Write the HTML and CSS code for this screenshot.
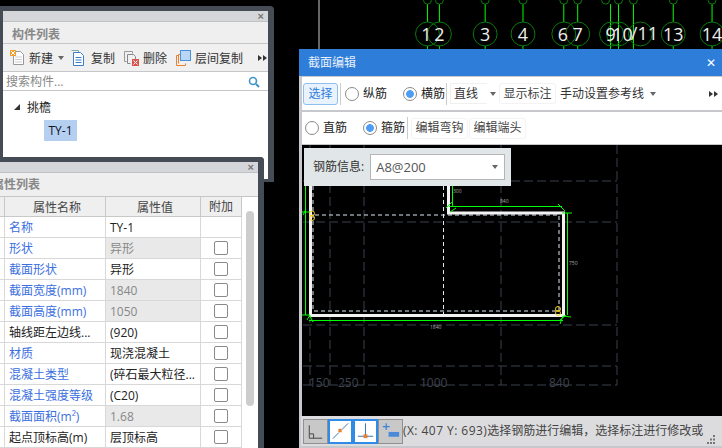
FILE: index.html
```html
<!DOCTYPE html>
<html lang="zh">
<head>
<meta charset="utf-8">
<title>截面编辑</title>
<link rel="stylesheet" href="styles.css">
</head>
<body>
<svg class="axes" viewBox="318 0 404 49" width="404" height="49">
  <g class="axis-lines">
    <path d="M426 4V22M426 46V49M438 4V22M438 46V49M484 4V22M484 46V49M522 4V22M522 46V49M563 4V22M563 46V49M577 4V22M577 46V49M610 4V49M618 4V49M633 4V49M673 4V22M673 46V49M712 4V22M712 46V49"/>
  </g>
  <g class="axis-rings">
    <circle cx="426" cy="0" r="4"/><circle cx="438" cy="0" r="4"/><circle cx="484" cy="0" r="4"/><circle cx="522" cy="0" r="4"/><circle cx="563" cy="0" r="4"/><circle cx="577" cy="0" r="4"/><circle cx="605" cy="0" r="4"/><circle cx="618" cy="0" r="4"/><circle cx="633" cy="0" r="4"/><circle cx="673" cy="0" r="4"/><circle cx="712" cy="0" r="4"/>
    <circle cx="426" cy="34" r="12"/><circle cx="438" cy="34" r="12"/><circle cx="484" cy="34" r="12"/><circle cx="522" cy="34" r="12"/><circle cx="563" cy="34" r="12"/><circle cx="577" cy="34" r="12"/><circle cx="611" cy="34" r="12"/><circle cx="618" cy="34" r="12"/><circle cx="640" cy="34" r="12"/><circle cx="673" cy="34" r="12"/><circle cx="712" cy="34" r="12"/>
  </g>
  <g class="axis-text">
    <text x="425" y="41">1</text><text x="438" y="41">2</text><text x="484" y="41">3</text><text x="522" y="41">4</text><text x="562" y="41">6</text><text x="577" y="41">7</text><text x="610" y="41">9</text><text x="622" y="41">10</text><text x="644" y="40">/11</text><text x="673" y="41">13</text><text x="712" y="41">14</text>
  </g>
</svg>

<section class="panel panel-list">
  <div class="panel-bar"><span class="close">×</span></div>
  <div class="panel-head">构件列表</div>
  <div class="list-tools">
    <span class="tool tool-new">
      <svg width="15" height="16" viewBox="0 0 15 16"><path d="M3.500 1.500h7l3 3v10h-10z" fill="#fff" stroke="#999"/><path d="M5 7h7M5 9.500h7M5 12h7" stroke="#ccc"/><rect x="0" y="0" width="6" height="6" fill="#f0a030"/><path d="M1 1l4 4M5 1l-4 4" stroke="#fff"/></svg>
      <span>新建</span><i class="caret caret-new"></i>
    </span>
    <span class="tool tool-copy">
      <svg width="14" height="16" viewBox="0 0 14 16"><path d="M.5.500h7v2" fill="none" stroke="#8aa"/><path d="M2.500 2.500h7l3 3v10h-10z" fill="#fff" stroke="#3a7fc8"/><path d="M4.500 7.500h6M4.500 10h6M4.500 12.500h6" stroke="#3a7fc8"/></svg>
      <span>复制</span>
    </span>
    <span class="tool tool-del">
      <svg width="15" height="16" viewBox="0 0 15 16"><path d="M.5 1.500h8v2M.5 1.500v10h2" fill="none" stroke="#999"/><path d="M3.500 4.500h6l2 2v3M3.500 4.500v9h3" fill="none" stroke="#888"/><rect x="8" y="9" width="7" height="7" fill="#d9534f"/><path d="M9.500 10.500l4 4M13.500 10.500l-4 4" stroke="#fff"/></svg>
      <span>删除</span>
    </span>
    <span class="tool tool-floor">
      <svg width="15" height="16" viewBox="0 0 15 16"><path d="M.5 15.500v-10h2M.5 15.500h9v-2M2.500 13.500v-9h2" fill="none" stroke="#e8812e" stroke-width="1"/><rect x="4.500" y=".5" width="10" height="10" fill="#b9d6f7" stroke="#4a8fdc"/></svg>
      <span>层间复制</span>
    </span>
    <span class="more"><i></i><i></i></span>
  </div>
  <div class="search">
    <span>搜索构件...</span>
    <svg width="12" height="12" viewBox="0 0 12 12"><circle cx="5" cy="5" r="3.500" fill="none" stroke="#3d95c9" stroke-width="1.600"/><path d="M8 8l3 3" stroke="#3d95c9" stroke-width="2"/></svg>
  </div>
  <div class="tree">
    <div class="tree-root"><i class="tree-arrow"></i><span>挑檐</span></div>
    <div class="tree-leaf"><span>TY-1</span></div>
  </div>
</section>

<section class="panel panel-props">
  <div class="panel-bar"><span class="close">×</span></div>
  <div class="panel-head">属性列表</div>
  <div class="props-body">
    <div class="props">
      <div class="row row-head"><b></b><b>属性名称</b><b>属性值</b><b>附加</b></div>
      <div class="row"><b></b><b class="link">名称</b><b>TY-1</b><b></b></div>
      <div class="row"><b></b><b class="link">形状</b><b class="ro">异形</b><b><i class="check"></i></b></div>
      <div class="row"><b></b><b class="link">截面形状</b><b>异形</b><b><i class="check"></i></b></div>
      <div class="row"><b></b><b class="link">截面宽度(mm)</b><b class="ro">1840</b><b><i class="check"></i></b></div>
      <div class="row"><b></b><b class="link">截面高度(mm)</b><b class="ro">1050</b><b><i class="check"></i></b></div>
      <div class="row"><b></b><b>轴线距左边线...</b><b>(920)</b><b><i class="check"></i></b></div>
      <div class="row"><b></b><b class="link">材质</b><b>现浇混凝土</b><b><i class="check"></i></b></div>
      <div class="row"><b></b><b class="link">混凝土类型</b><b>(碎石最大粒径...</b><b><i class="check"></i></b></div>
      <div class="row"><b></b><b class="link">混凝土强度等级</b><b>(C20)</b><b><i class="check"></i></b></div>
      <div class="row"><b></b><b class="link">截面面积(m²)</b><b class="ro">1.68</b><b><i class="check"></i></b></div>
      <div class="row"><b></b><b>起点顶标高(m)</b><b>层顶标高</b><b><i class="check"></i></b></div>
    </div>
    <div class="scroll"><div class="thumb"></div></div>
  </div>
</section>

<section class="dialog">
  <header class="dialog-title"><span>截面编辑</span><span class="dialog-close">✕</span></header>
  <div class="bar bar-one">
    <span class="btn btn-on">选择</span>
    <i class="sep"></i>
    <span class="radio r1"><i></i>纵筋</span>
    <span class="radio r2 on"><i></i>横筋</span>
    <i class="sep sep2"></i>
    <span class="combo">直线</span><i class="caret caret-combo"></i>
    <span class="btn btn-plain btn-show">显示标注</span>
    <span class="text-menu">手动设置参考线<i class="caret caret-menu"></i></span>
    <span class="more more-right"><i></i><i></i></span>
  </div>
  <div class="bar bar-two">
    <span class="radio r3"><i></i>直筋</span>
    <span class="radio r4 on"><i></i>箍筋</span>
    <i class="sep sep3"></i>
    <span class="btn btn-plain">编辑弯钩</span>
    <span class="btn btn-plain">编辑端头</span>
  </div>
  <div class="canvas">
    <svg class="drawing" viewBox="299 145 423 271" width="423" height="271">
      <g class="grid">
        <path d="M310 145V385M330 145V385M364 145V385M501 145V385M617 145V385"/>
        <path d="M303 181H617M303 222H617M303 325H617M303 366H617M303 385H617"/>
      </g>
      <g class="dims"><text x="309" y="387">150</text><text x="338" y="387">250</text><text x="420" y="387">1000</text><text x="549" y="387">840</text></g>
      <g class="guide"><path d="M313 186V311H559V215H313M443.500 186V315"/></g>
      <g class="outline"><path d="M310.500 186V315.500H563.500V213H448.500V186"/></g>
      <g class="rebar">
        <path d="M305.500 186V315M309 320.500H563M567.500 213V315M449 206.500H562M452.500 186V206"/>
        <path d="M302 212h8M306 209l-3 6M302 315h8M562 213h10M307 320l3 -5M563 316l8 1M560 320l6 -5M446 208l6 -6M558 204l7 7M450 212l6 -4M310 316l3 6M563 316l-3 8"/>
      </g>
      <g class="marks">
        <circle cx="312" cy="213.500" r="2.500"/><circle cx="312" cy="218" r="2.500"/>
        <circle cx="558" cy="309" r="2.500"/><circle cx="558" cy="313" r="2.500"/>
      </g>
      <g class="tiny"><text x="453" y="193">300</text><text x="500" y="203">840</text><text x="569" y="265">750</text><text x="430" y="329">1840</text></g>
    </svg>
    <div class="info">
      <label>钢筋信息:</label>
      <div class="info-select"><span>A8@200</span><i class="caret"></i></div>
    </div>
  </div>
  <footer class="status">
    <span class="sbtn">
      <svg width="24" height="24" viewBox="0 0 24 24"><path d="M5.500 6V19.500H19M5.500 15H10V19.500" fill="none" stroke="#444"/></svg>
    </span>
    <span class="sbtn sbtn-on">
      <svg width="22" height="22" viewBox="0 0 22 22"><path d="M3 19L19 3" stroke="#3a6fb5"/><rect x="8.500" y="8.500" width="4" height="4" fill="#e8812e" stroke="#fff" stroke-width=".5"/></svg>
    </span>
    <span class="sbtn sbtn-on">
      <svg width="22" height="22" viewBox="0 0 22 22"><path d="M11 3V17M3 16.500H19" stroke="#3a6fb5"/><rect x="9" y="14.500" width="4" height="4" fill="#e8812e"/></svg>
    </span>
    <span class="sbtn">
      <svg width="24" height="24" viewBox="0 0 24 24"><path d="M4 7.500H11M7.500 4V11" stroke="#3a80d8" stroke-width="1.200"/><rect x="10" y="13" width="11" height="5" fill="#4a8ad8"/></svg>
    </span>
    <span class="status-text"><span class="coords">(X: 407 Y: 693)</span>选择钢筋进行编辑，选择标注进行修改或</span>
    <svg class="grip" width="10" height="10" viewBox="0 0 10 10"><path d="M7 0h2v2H7zM4 3.500h2v2H4zM7 3.500h2v2H7zM1 7h2v2H1zM4 7h2v2H4zM7 7h2v2H7z" fill="#777"/></svg>
  </footer>
</section>
</body>
</html>
```
FILE: styles.css
```css
* { box-sizing: border-box; }
html, body { margin: 0; height: 100%; }
body {
  position: relative;
  width: 722px;
  height: 448px;
  overflow: hidden;
  background: #000;
  font: 12px/16px "Open Sans", "Noto Sans CJK SC", sans-serif;
  color: #222;
}
i { display: block; font-style: normal; }
b { font-weight: 400; }

/* top CAD strip */
.axes { position: absolute; left: 318px; top: 0; border-left: 2px solid #666; }
.axis-lines path { stroke: #0f0; fill: none; }
.axis-rings circle { stroke: #0a7a0a; fill: none; }
.axis-text text { fill: #eee; font: 18px "Open Sans", sans-serif; text-anchor: middle; }

/* floating panels */
.panel {
  position: absolute;
  display: flex;
  flex-direction: column;
  background: #fff;
  border: 3px solid #454c55;
  border-top-width: 5px;
  border-right-width: 6px;
  border-radius: 0 4px 0 0;
}
.panel-list { left: 0; top: 6px; width: 274px; height: 176px; }
.panel-props { left: -17px; top: 157px; width: 281px; height: 300px; border-left: 0; z-index: 2; }
.panel-bar { height: 11px; flex: none; background: #d5d6da; border-bottom: 1px solid #c0c3c6; display: flex; justify-content: flex-end; padding-right: 4px; }
.close { font: 700 11px/11px "Liberation Sans", sans-serif; color: #777; }
.panel-head { height: 22px; flex: none; background: #efefef; border-bottom: 1px solid #c4c6c8; padding: 5px 9px 0; font-weight: 700; color: #888; }
.panel-props .panel-head { height: 24px; padding-top: 4px; }

.list-tools { height: 28px; flex: none; background: #f0f0f0; border-bottom: 1px solid #c4c6c8; display: flex; align-items: center; padding-left: 7px; white-space: nowrap; }
.tool { display: flex; flex: none; align-items: center; gap: 4px; color: #333; }
.tool span { padding-top: 2px; }
.tool-copy { margin-left: 7px; gap: 6px; }
.tool-del { margin-left: 9px; }
.tool-floor { margin-left: 9px; }
.caret { flex: none; width: 0; height: 0; border: 3px solid transparent; border-top: 4px solid #666; border-bottom: 0; }
.caret-new { margin-left: 1px; }
.more { display: flex; flex: none; margin-left: 15px; }
.more i { width: 0; height: 0; border: 3px solid transparent; border-left: 4px solid #333; border-right: 0; margin-right: 1px; }
.more-right { margin-left: auto; margin-right: 3px; }

.search { height: 19px; flex: none; background: #fff; border-bottom: 1px solid #c4c6c8; display: flex; align-items: center; justify-content: space-between; padding: 1px 8px 0 3px; color: #888; }
.tree { flex: 1; background: #fff; padding-top: 7px; }
.tree-root { display: flex; align-items: center; height: 18px; padding-left: 11px; color: #222; }
.tree-root span { margin-left: -2px; padding-top: 2px; }
.tree-arrow { width: 0; height: 0; border-left: 6px solid transparent; border-bottom: 6px solid #333; margin-right: 9px; }
.tree-leaf { margin: 4px 0 0 41px; }
.tree-leaf span { display: inline-block; width: 33px; height: 21px; line-height: 21px; text-align: center; background: #b4cff0; color: #112; }

.props-body { display: flex; flex: 1; background: #fff; }
.props { width: 259px; flex: none; }
.row { display: grid; grid-template-columns: 22px 101px 95px 41px; height: 21px; }
.row b { display: flex; align-items: center; padding: 2px 0 0 4px; border-right: 1px solid #d8d8d8; border-bottom: 1px solid #d8d8d8; white-space: nowrap; overflow: hidden; color: #222; }
.row b:last-child { justify-content: center; padding: 0; }
.row-head { height: 20px; }
.row-head b { background: #efefef; border-color: #c8c8c8; justify-content: center; color: #444; }
.row b.link { color: #3b6fe0; }
.row b.ro { background: #e9e9e9; color: #888; }
.check { width: 14px; height: 14px; border: 1px solid #8a8a8a; border-radius: 2px; background: #fff; }
.scroll { width: 16px; padding: 14px 4px 0; }
.thumb { width: 8px; height: 195px; background: #cdcdcd; border-radius: 4px; }

/* section editor window */
.dialog { position: absolute; left: 299px; top: 49px; width: 423px; height: 399px; display: flex; flex-direction: column; z-index: 3; background: #c6c8cc; }
.dialog-title { height: 27px; flex: none; background: #2d7dd9; color: #e8f0fa; display: flex; align-items: center; justify-content: space-between; padding: 0 6px 0 9px; }
.dialog-close { font: 700 12px "DejaVu Sans", sans-serif; color: #fff; }
.bar { margin-left: 3px; background: #fff; display: flex; align-items: center; position: relative; flex: none; }
.bar-one { height: 33px; margin-top: 1px; }
.bar-two { height: 32px; margin-top: 2px; }
.btn { display: flex; align-items: center; justify-content: center; height: 21px; color: #444; }
.btn-on { width: 35px; height: 22px; margin-left: 1px; border: 1px solid #8fbef0; border-radius: 3px; background: #e9f3fd; color: #2f7ddb; }
.btn-plain { width: 57px; border: 1px solid #f3f3f3; border-radius: 3px; }
.btn-plain + .btn-plain { margin-left: 1px; }
.btn-show { margin-left: 3px; }
.sep { width: 1px; height: 22px; background: #ccc; margin: 0 4px 0 2px; }
.radio { display: flex; align-items: center; gap: 4px; color: #222; }
.radio i { width: 14px; height: 14px; border: 1px solid #8b8b8b; border-radius: 50%; background: #fff; position: relative; }
.radio.on i { background: radial-gradient(circle, #4d9df5 0, #4d9df5 3.5px, #fff 4.2px); }
.r2 { margin-left: 16px; }
.sep2 { margin: 0 3px 0 1px; }
.combo { width: 37px; height: 21px; padding: 2px 0 0 3px; border: 1px solid #f0f0f0; border-right: 0; color: #333; }
.caret-combo { margin-left: 3px; }
.text-menu { display: flex; align-items: center; margin-left: 4px; color: #333; }
.caret-menu { margin-left: 6px; }
.r3 { margin-left: 3px; }
.r4 { margin-left: 16px; }
.sep3 { margin: 0 3px 0 2px; }

.canvas { flex: 1; position: relative; margin-top: 1px; margin-left: 3px; background: #000; overflow: hidden; }
.drawing { position: absolute; left: -3px; top: 0; }
.grid path { stroke: #3b414c; fill: none; stroke-dasharray: 9 4; }
.dims text { fill: #3f4550; font-size: 12px; }
.guide path { stroke: #dfe7f5; fill: none; stroke-dasharray: 4 3; }
.outline path { stroke: #f2f2f2; fill: none; stroke-width: 3; }
.rebar path { stroke: #0f0; fill: none; }
.marks circle { stroke: #f5d020; fill: none; }
.tiny text { fill: #aaa; font-size: 5px; }
.info { position: absolute; left: 2px; top: 3px; width: 207px; height: 38px; background: #e1e6e8; display: flex; align-items: center; padding-left: 9px; color: #333; }
.info-select { width: 135px; height: 26px; margin-left: 6px; background: #fff; border: 1px solid #b5b5b5; display: flex; align-items: center; justify-content: space-between; padding: 0 6px 0 5px; font-size: 13px; color: #555; }

.status { height: 32px; flex: none; margin-left: 2px; background: #dcdcde; border-bottom: 2px solid #c6c8cc; display: flex; align-items: center; padding-left: 2px; position: relative; }
.sbtn { flex: none; width: 25px; height: 25px; border: 1px solid #909090; background: #c8c8c8; display: flex; align-items: center; justify-content: center; }
.sbtn-on { background: #fff; border: 2px solid #2f8be6; }
.status-text { margin-left: 0; color: #444; white-space: nowrap; }
.coords { letter-spacing: .45px; }
.grip { position: absolute; right: 6px; bottom: 1px; }
```
